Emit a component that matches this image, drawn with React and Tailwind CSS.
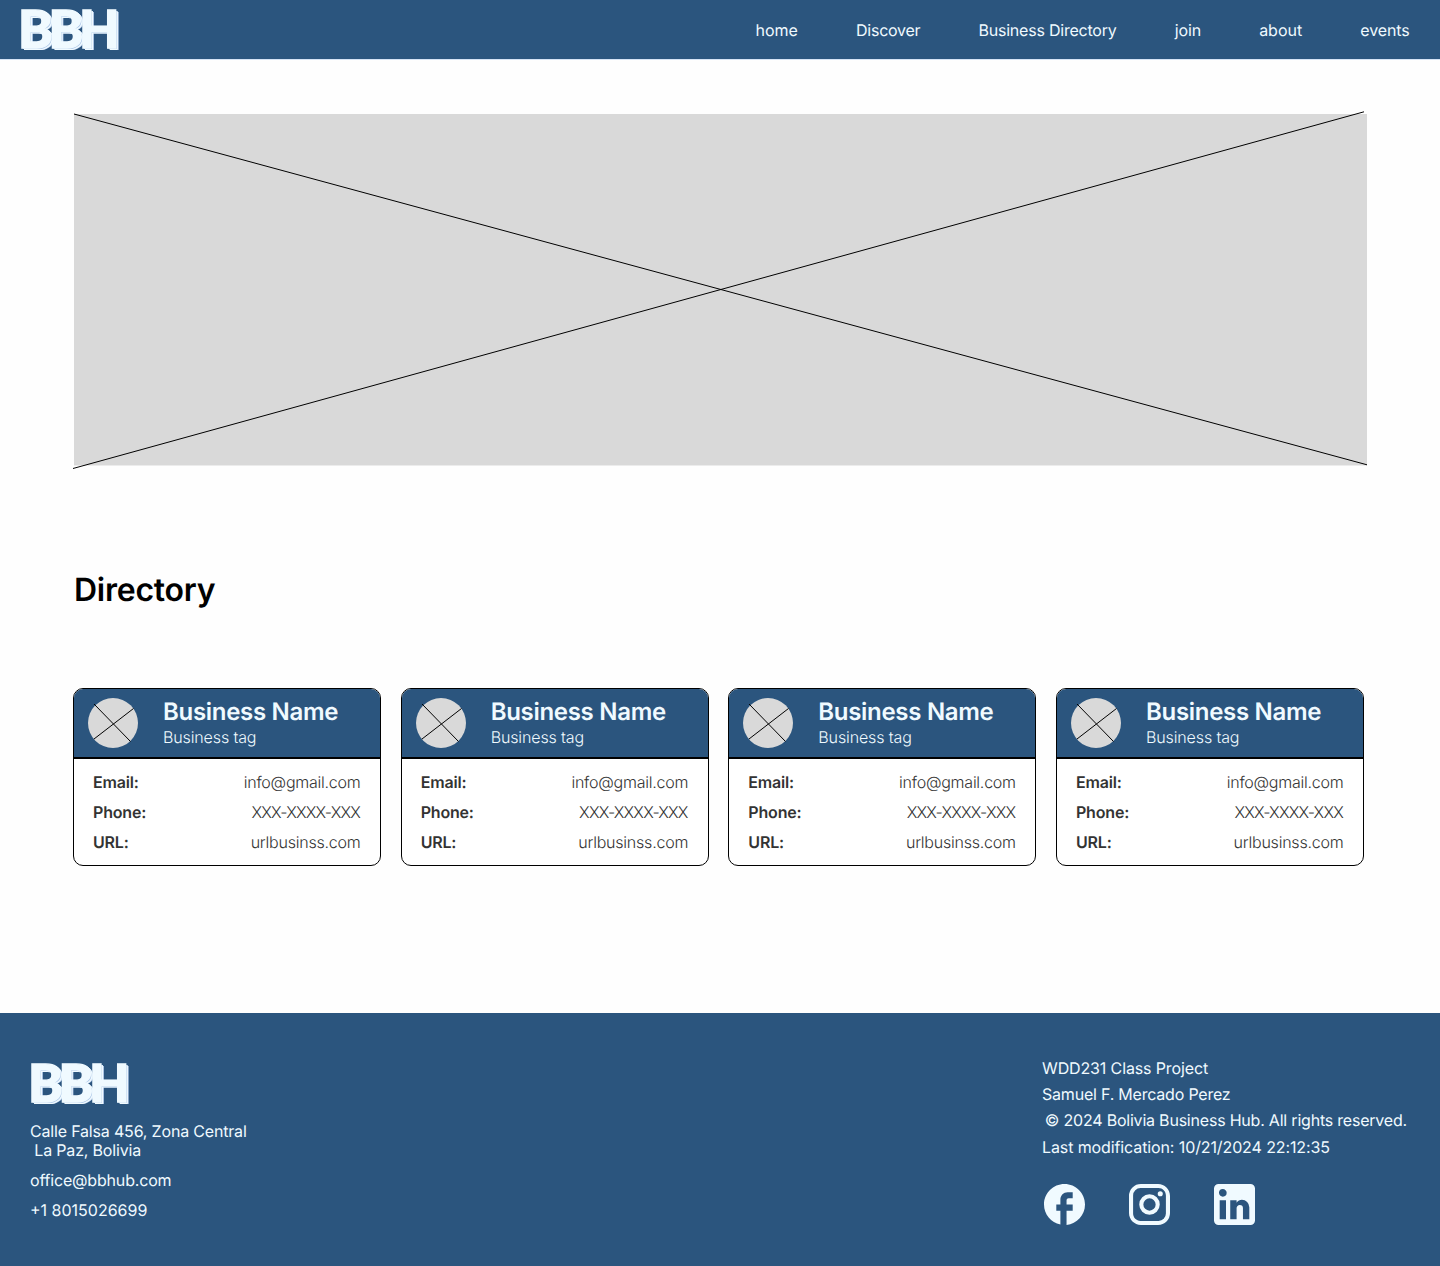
const NAV = [
  ['home', 'tracking-normal'],
  ['Discover', 'tracking-[-0.25px]'],
  ['Business Directory', 'tracking-[-0.22px]'],
  ['join', 'tracking-[-0.1px]'],
  ['about', 'tracking-normal'],
  ['events', 'tracking-[-0.1px]'],
];
const DETAILS = [
  ['Email:', 'info@gmail.com', 'tracking-[-0.24px] -mr-[0.5px]'],
  ['Phone:', 'XXX-XXXX-XXX', 'tracking-[-0.8px]'],
  ['URL:', 'urlbusinss.com', 'tracking-[-0.22px] -mr-[0.5px]'],
];

function Logo() {
  return (
    <div className="flex h-[42px] w-[112px] items-center">
      <span className="-ml-[3px] w-[112px] font-['Lato'] text-[52.5px] leading-[40px] font-black tracking-[-4.3px] text-[#F0FAFF] [-webkit-text-stroke:1.4px_#F0FAFF] [text-shadow:1px_1px_#A9C4E6,2px_1px_#F0FAFF,2px_2px_#F0FAFF,3px_2px_#B5CCEB]">BBH</span>
    </div>
  );
}

function Card() {
  return (
    <article className="h-[178px] w-[308px] overflow-hidden rounded-[10px] border border-black bg-white">
      <header className="flex h-[70px] border-b-2 border-black bg-[#2B557E] pl-3.5">
        <svg width="50" height="50" viewBox="0 0 50 50" className="mt-[9px] shrink-0">
          <circle cx="25" cy="25" r="25" fill="#D9D9D9" />
          <path d="M6 6 42.5 43.5M6 41 45.5 10.5" stroke="black" />
        </svg>
        <div className="ml-[25px] pt-[8px] text-[#F0FAFF]">
          <h2 className="text-2xl leading-[30px] font-semibold tracking-[-0.3px] whitespace-nowrap">Business Name</h2>
          <p className="text-base leading-5 font-light tracking-[-0.12px]">Business tag</p>
        </div>
      </header>
      <dl className="flex flex-col gap-[10px] pt-[13px] pr-[20px] pl-[19px] text-base leading-5 text-[#333]">
        {DETAILS.map(([label, value, tracking]) => (
          <div key={label} className="flex justify-between">
            <dt className="font-semibold tracking-[-0.18px]">{label}</dt>
            <dd className={`font-light ${tracking}`}>{value}</dd>
          </div>
        ))}
      </dl>
    </article>
  );
}

function Socials() {
  return (
    <div className="flex gap-11 fill-[#F0FAFF]">
      <svg width="41" height="41" viewBox="2 2 20 20">
        <path d="M22 12c0-5.52-4.48-10-10-10S2 6.48 2 12c0 4.84 3.44 8.87 8 9.8V15H8v-3h2V9.5C10 7.57 11.57 6 13.5 6H16v3h-2c-.55 0-1 .45-1 1v2h3v3h-3v6.95c5.05-.5 9-4.76 9-9.95z" />
      </svg>
      <svg width="41" height="41" viewBox="2 2 20 20">
        <path d="M7.8 2h8.4C19.4 2 22 4.6 22 7.8v8.4a5.8 5.8 0 0 1-5.8 5.8H7.8C4.6 22 2 19.4 2 16.2V7.8A5.8 5.8 0 0 1 7.8 2m-.2 2A3.6 3.6 0 0 0 4 7.6v8.8C4 18.39 5.61 20 7.6 20h8.8a3.6 3.6 0 0 0 3.6-3.6V7.6C20 5.61 18.39 4 16.4 4H7.6m9.65 1.5a1.25 1.25 0 0 1 1.25 1.25A1.25 1.25 0 0 1 17.25 8 1.25 1.25 0 0 1 16 6.75a1.25 1.25 0 0 1 1.25-1.25M12 7a5 5 0 0 1 5 5 5 5 0 0 1-5 5 5 5 0 0 1-5-5 5 5 0 0 1 5-5m0 2a3 3 0 0 0-3 3 3 3 0 0 0 3 3 3 3 0 0 0 3-3 3 3 0 0 0-3-3z" />
      </svg>
      <svg width="41" height="41" viewBox="3 3 18 18">
        <path d="M19 3a2 2 0 0 1 2 2v14a2 2 0 0 1-2 2H5a2 2 0 0 1-2-2V5a2 2 0 0 1 2-2h14m-.5 15.5v-5.3a3.26 3.26 0 0 0-3.26-3.26c-.85 0-1.84.52-2.32 1.3v-1.11h-2.79v8.37h2.79v-4.93c0-.77.62-1.4 1.39-1.4a1.4 1.4 0 0 1 1.4 1.4v4.93h2.79M6.88 8.56a1.68 1.68 0 0 0 1.68-1.68c0-.93-.75-1.69-1.68-1.69a1.69 1.69 0 0 0-1.69 1.69c0 .93.76 1.68 1.69 1.68m1.39 9.94v-8.37H5.5v8.37h2.77z" />
      </svg>
    </div>
  );
}

export default function App() {
  return (
    <div className="flex h-[1266px] w-[1440px] flex-col bg-[#FEFEFE] font-['Inter',sans-serif] text-black [text-rendering:geometricPrecision]">
      <header className="flex h-[60px] shrink-0 justify-between border-b border-[#D5E3F5] bg-[#2B557E] pr-[30.3px] pl-[21px]">
        <div className="pt-2"><Logo /></div>
        <nav className="flex items-center gap-[58.1px] text-base text-[#F0FAFF]">
          {NAV.map(([item, tracking]) => <a key={item} className={tracking}>{item}</a>)}
        </nav>
      </header>

      <main className="flex-1 pl-[73px]">
        <svg width="1296" height="358" viewBox="0 0 1296 358" className="mt-[51px] block">
          <rect x="1" y="3" width="1293" height="351.5" fill="#D9D9D9" />
          <path d="M1 3 1294 353.8M0 357.5 1291 .8" stroke="black" />
        </svg>
        <h1 className="mt-[101px] pl-px text-[32px] leading-10 font-semibold tracking-[-0.25px]">Directory</h1>
        <section className="mt-[78px] flex gap-[19.67px]">
          {[0, 1, 2, 3].map((i) => <Card key={i} />)}
        </section>
      </main>

      <footer className="flex h-[253px] shrink-0 justify-between bg-[#2B557E] pl-[30px] text-base text-[#F0FAFF]">
        <div className="pt-[49px]">
          <div className="pl-px"><Logo /></div>
          <address className="mt-[18px] leading-[19px] tracking-[-0.18px] whitespace-pre not-italic">{'Calle Falsa 456, Zona Central\n La Paz, Bolivia'}</address>
          <p className="mt-[11px] leading-[19px] tracking-[-0.18px]">office@bbhub.com</p>
          <p className="mt-[11px] leading-[19px]">+1 8015026699</p>
        </div>
        <div className="w-[398px] pt-[41.6px]">
          <div className="leading-[26.4px] whitespace-pre">
            <p className="tracking-[-0.13px]">WDD231 Class Project</p>
            <p className="tracking-[-0.21px]">Samuel F. Mercado Perez</p>
            <p className="-ml-[1.5px] tracking-[-0.21px]">{' © 2024 Bolivia Business Hub. All rights reserved.'}</p>
            <p className="tracking-[-0.11px]">Last modification: 10/21/2024 22:12:35</p>
          </div>
          <div className="mt-[24.2px] pl-0.5"><Socials /></div>
        </div>
      </footer>
    </div>
  );
}
